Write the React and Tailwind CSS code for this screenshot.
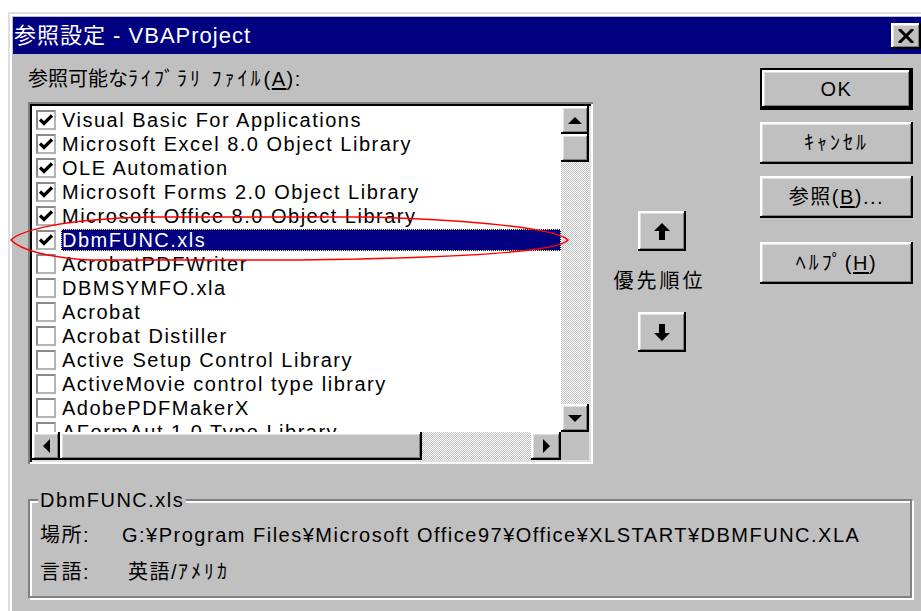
import React from "react";

const raised =
  "bg-[#c0c0c0] shadow-[inset_-2px_-2px_0_#000000,inset_2px_2px_0_#ffffff,inset_-3px_-3px_0_#808080,inset_3px_3px_0_#dfdfdf]";
const dither =
  "bg-[repeating-conic-gradient(#c0c0c0_0%_25%,#ffffff_0%_50%)] bg-[length:2px_2px]";

const libraries = [
  ["Visual Basic For Applications", true],
  ["Microsoft Excel 8.0 Object Library", true],
  ["OLE Automation", true],
  ["Microsoft Forms 2.0 Object Library", true],
  ["Microsoft Office 8.0 Object Library", true],
  ["DbmFUNC.xls", true, true],
  ["AcrobatPDFWriter", false],
  ["DBMSYMFO.xla", false],
  ["Acrobat", false],
  ["Acrobat Distiller", false],
  ["Active Setup Control Library", false],
  ["ActiveMovie control type library", false],
  ["AdobePDFMakerX", false],
  ["AFormAut 1.0 Type Library", false],
];

function CheckBox({ checked }) {
  return (
    <div className="flex h-[20px] w-[20px] shrink-0 items-center justify-center border-2 border-[#b4b4b4] border-t-[#8a8a8a] border-l-[#8a8a8a] bg-white">
      {checked && (
        <svg width="16" height="16" viewBox="0 0 16 16">
          <polyline points="2,7.5 6,11.5 14,3.5" fill="none" stroke="#000" strokeWidth="3.2" />
        </svg>
      )}
    </div>
  );
}

function Row({ label, checked, selected }) {
  return (
    <div className="flex h-[24px] items-center pl-[4px]">
      <CheckBox checked={checked} />
      {selected ? (
        <div className="ml-[5px] flex h-[22px] flex-1 items-center whitespace-nowrap bg-[#000080] pl-[1px] text-white outline-1 outline-dotted -outline-offset-1 outline-[#ffff60]">
          {label}
        </div>
      ) : (
        <div className="ml-[6px] whitespace-nowrap">{label}</div>
      )}
    </div>
  );
}

function Tri({ dir }) {
  const pts = {
    up: "0,7 7,0 14,7",
    down: "0,0 14,0 7,7",
    left: "7,0 7,14 0,7",
    right: "0,0 0,14 7,7",
  }[dir];
  const v = dir === "up" || dir === "down";
  return (
    <svg width={v ? 14 : 7} height={v ? 7 : 14} viewBox={v ? "0 0 14 7" : "0 0 7 14"}>
      <polygon points={pts} fill="#000" />
    </svg>
  );
}

function Arrow({ down }) {
  return (
    <svg width="16" height="17" viewBox="0 0 16 17" className={down ? "rotate-180" : ""}>
      <polygon points="8,0 16,8 11,8 11,17 5,17 5,8 0,8" fill="#000" />
    </svg>
  );
}

function Button({ children, def, className = "" }) {
  return (
    <div className={`${def ? "border-2 border-black" : ""} ${className}`}>
      <div className={`flex h-full items-center justify-center ${raised}`}>{children}</div>
    </div>
  );
}

export default function App() {
  return (
    <div className="relative h-[611px] w-[921px] overflow-hidden bg-white pt-[12px] pl-[8px] font-['Liberation_Sans','Noto_Sans_CJK_JP',sans-serif] text-[20px] tracking-[1.5px] text-black">
      <div className="h-[620px] w-[915px] bg-[#c0c0c0] pt-[5px] pl-[5px] shadow-[inset_2px_2px_0_#dfdfdf,inset_4px_4px_0_#ffffff]">
        {/* caption */}
        <div className="flex h-[37px] items-center justify-between bg-[#000080] pl-[1px] text-[22px] tracking-[1px] text-white">
          <span>参照設定 - VBAProject</span>
          <div className={`mr-[2px] flex h-[26px] w-[30px] items-center justify-center ${raised}`}>
            <svg width="16" height="14" viewBox="0 0 16 14">
              <path d="M1,0 L15,14 M15,0 L1,14" stroke="#000" strokeWidth="3" />
            </svg>
          </div>
        </div>

        <div className="flex">
          <div className="ml-[15px] w-[565px] shrink-0">
            <div className="mt-[13px] h-[24px] leading-[24px]">
              <span className="tracking-[0px]">参照可能な</span>
              <span className="tracking-[3px]">ﾗｲﾌﾞﾗﾘ ﾌｧｲﾙ</span>(
              <span className="underline underline-offset-2">A</span>):
            </div>
            {/* reference list */}
            <div className="mt-[11px] flex h-[362px] flex-col bg-[#c0c0c0] p-[4px] shadow-[inset_2px_2px_0_#808080,inset_-2px_-2px_0_#ffffff,inset_4px_4px_0_#000000,inset_-4px_-4px_0_#dfdfdf]">
              <div className="flex min-h-0 flex-1">
                <div className="flex-1 overflow-hidden bg-white pt-[2px]">
                  {libraries.map(([label, checked, selected]) => (
                    <Row key={label} label={label} checked={checked} selected={selected} />
                  ))}
                </div>
                <div className="flex w-[28px] flex-col">
                  <div className={`flex h-[28px] items-center justify-center ${raised}`}>
                    <Tri dir="up" />
                  </div>
                  <div className={`h-[28px] ${raised}`} />
                  <div className={`flex-1 ${dither}`} />
                  <div className={`flex h-[28px] items-center justify-center ${raised}`}>
                    <Tri dir="down" />
                  </div>
                </div>
              </div>
              <div className="flex h-[28px]">
                <div className={`flex w-[28px] items-center justify-center ${raised}`}>
                  <Tri dir="left" />
                </div>
                <div className={`w-[362px] ${raised}`} />
                <div className={`flex-1 ${dither}`} />
                <div className={`flex w-[30px] items-center justify-center ${raised}`}>
                  <Tri dir="right" />
                </div>
                <div className="w-[28px] bg-[#c0c0c0]" />
              </div>
            </div>
          </div>

          {/* priority */}
          <div className="ml-[17px] flex w-[96px] shrink-0 flex-col items-center pt-[157px]">
            <Button className="ml-[8px] h-[40px] w-[48px]">
              <Arrow />
            </Button>
            <div className="mt-[16px] h-[28px] pl-[3px] leading-[28px] tracking-[3px]">優先順位</div>
            <Button className="mt-[17px] ml-[8px] h-[40px] w-[48px]">
              <Arrow down />
            </Button>
          </div>

          <div className="ml-[54px] flex w-[153px] shrink-0 flex-col pt-[14px]">
            <Button def className="h-[42px]">OK</Button>
            <Button className="mt-[12px] h-[42px]">
              <span className="tracking-[3px]">ｷｬﾝｾﾙ</span>
            </Button>
            <Button className="mt-[12px] h-[42px]">
              参照(<span className="underline underline-offset-2">B</span>)...
            </Button>
            <Button className="mt-[24px] h-[42px]">
              <span className="tracking-[3px]">ﾍﾙﾌﾟ</span>(<span className="underline underline-offset-2">H</span>)
            </Button>
          </div>
        </div>

        {/* selected library details */}
        <fieldset className="mt-[24px] ml-[15px] h-[110px] w-[884px] border-2 border-[#808080] shadow-[2px_2px_0_#ffffff,inset_2px_2px_0_#ffffff]">
          <legend className="ml-[8px] bg-[#c0c0c0] px-[2px] leading-[24px]">DbmFUNC.xls</legend>
          <div className="pl-[10px]">
            <div className="mt-[9px] flex h-[28px] items-center">
              <span className="w-[82px]">場所:</span>
              <span>G:¥Program Files¥Microsoft Office97¥Office¥XLSTART¥DBMFUNC.XLA</span>
            </div>
            <div className="mt-[9px] flex h-[28px] items-center">
              <span className="w-[88px]">言語:</span>
              <span>
                英語/<span className="tracking-[3px]">ｱﾒﾘｶ</span>
              </span>
            </div>
          </div>
        </fieldset>
      </div>

      {/* hand-drawn highlight around the selected entry */}
      <svg className="pointer-events-none absolute top-0 left-0" width="921" height="611">
        <path
          d="M11,240 C20,231 60,219 150,217 L370,217 C470,220 556,228 568,240 C558,252 460,258 300,260 L90,260 C50,258 20,250 11,240 Z"
          fill="none"
          stroke="#ff0000"
          strokeWidth="1.5"
        />
      </svg>
    </div>
  );
}
